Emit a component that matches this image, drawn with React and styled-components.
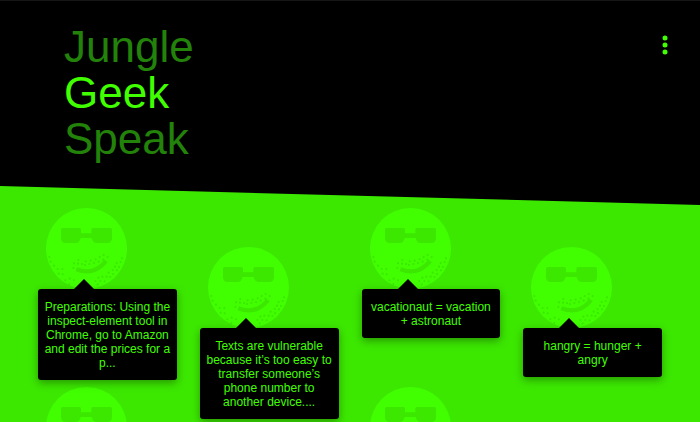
import React from "react";
import styled, { createGlobalStyle } from "styled-components";

const GlobalStyle = createGlobalStyle`
  * { box-sizing: border-box; }
  body {
    margin: 0;
    background: #3ce800;
    font-family: "Liberation Sans", Arial, sans-serif;
  }
`;

const Page = styled.div`
  height: 100vh;
  overflow: hidden;
  background: #3ce800;
`;

const Header = styled.header`
  display: flex;
  justify-content: space-between;
  align-items: flex-start;
  padding: 23px 24px 43px 64px;
  border-top: 1px solid #161616;
  background: #000;
  clip-path: polygon(0 0, 100% 0, 100% 100%, 0 calc(100% - 19px));
`;

const Title = styled.h1`
  margin: 0;
  font-size: 44px;
  line-height: 46px;
  font-weight: 400;
`;

const TitleWord = styled.span`
  display: block;
  color: ${(p) => (p.$bright ? "#41ff00" : "#22820a")};
`;

const MenuButton = styled.button`
  display: flex;
  justify-content: center;
  align-items: center;
  width: 22px;
  height: 30px;
  margin-top: 6px;
  padding: 0;
  border: 0;
  background: none;
  color: #41ff00;
  cursor: pointer;
`;

const Board = styled.main`
  display: grid;
  grid-template-columns: repeat(4, minmax(0, 1fr));
  gap: 23px;
  padding: 3px 38px 0;
`;

const Column = styled.div`
  display: flex;
  flex-direction: column;
  gap: 7px;
  padding-top: ${(p) => (p.$lowered ? "39px" : "0")};
`;

const Entry = styled.article`
  min-height: 172px;
`;

const FaceIcon = styled.svg`
  display: block;
  width: 81px;
  height: 81px;
  margin-left: 8px;
`;

const Bubble = styled.p`
  position: relative;
  margin: 0;
  padding: 11px 5px 10px;
  border-radius: 3px;
  background: #000;
  box-shadow: 0 3px 8px rgba(0, 0, 0, 0.35);
  color: #41ff00;
  font-size: 12px;
  line-height: 14px;
  text-align: center;

  &::before {
    content: "";
    position: absolute;
    bottom: 100%;
    left: 36px;
    border: 10px solid transparent;
    border-top: 0;
    border-bottom-color: #000;
  }
`;

const stubble = [
  [10, 147], [14, 161], [24, 173], [35, 183], [49, 183], [38, 197], [50, 199],
  [71, 212], [58, 217], [84, 217], [70, 228],
  [97, 156], [84, 166], [82, 180], [96, 167], [108, 168], [119, 160],
  [117, 171], [130, 168], [134, 158], [144, 165], [149, 154], [158, 161],
  [161, 147], [173, 141], [172, 155], [185, 147],
  [228, 151], [224, 162], [212, 165], [207, 176], [219, 177], [200, 186],
  [213, 187], [188, 194], [201, 198], [182, 206], [193, 207], [169, 206],
  [157, 209], [163, 219], [176, 220], [148, 219], [155, 229],
];

function Face() {
  return (
    <FaceIcon viewBox="0 0 243 243" aria-hidden="true">
      <circle cx="121.500" cy="121.500" r="121.500" fill="#41ff00" />
      <g fill="#3ce800">
        <path d="M50 60H100Q105 60 105 65V76H136V65Q136 60 141 60H193Q198 60 198 65V90Q198 105 183 105H153Q140 105 137 90H104Q101 105 88 105H60Q45 105 45 90V65Q45 60 50 60Z" />
        {stubble.map(([x, y]) => (
          <circle key={`${x}-${y}`} cx={x} cy={y} r="3.2" />
        ))}
      </g>
      <path d="M91 184Q145 204 180 159" fill="none" stroke="#3ce800" strokeWidth="13" />
    </FaceIcon>
  );
}

const columns = [
  [
    "Preparations: Using the inspect-element tool in Chrome, go to Amazon and edit the prices for a p...",
    null,
  ],
  ["Texts are vulnerable because it’s too easy to transfer someone’s phone number to another device...."],
  ["vacationaut = vacation +\u00a0astronaut", null],
  ["hangry = hunger + angry"],
];

export default function App() {
  return (
    <Page>
      <GlobalStyle />
      <Header>
        <Title>
          <TitleWord>Jungle</TitleWord>
          <TitleWord $bright>Geek</TitleWord>
          <TitleWord>Speak</TitleWord>
        </Title>
        <MenuButton type="button" aria-label="Menu">
          <svg width="6" height="20" viewBox="0 0 6 20" fill="currentColor">
            <circle cx="3" cy="3" r="2.500" />
            <circle cx="3" cy="10" r="2.500" />
            <circle cx="3" cy="17" r="2.500" />
          </svg>
        </MenuButton>
      </Header>
      <Board>
        {columns.map((entries, i) => (
          <Column key={i} $lowered={i % 2 === 1}>
            {entries.map((text, j) => (
              <Entry key={j}>
                <Face />
                {text && <Bubble>{text}</Bubble>}
              </Entry>
            ))}
          </Column>
        ))}
      </Board>
    </Page>
  );
}
